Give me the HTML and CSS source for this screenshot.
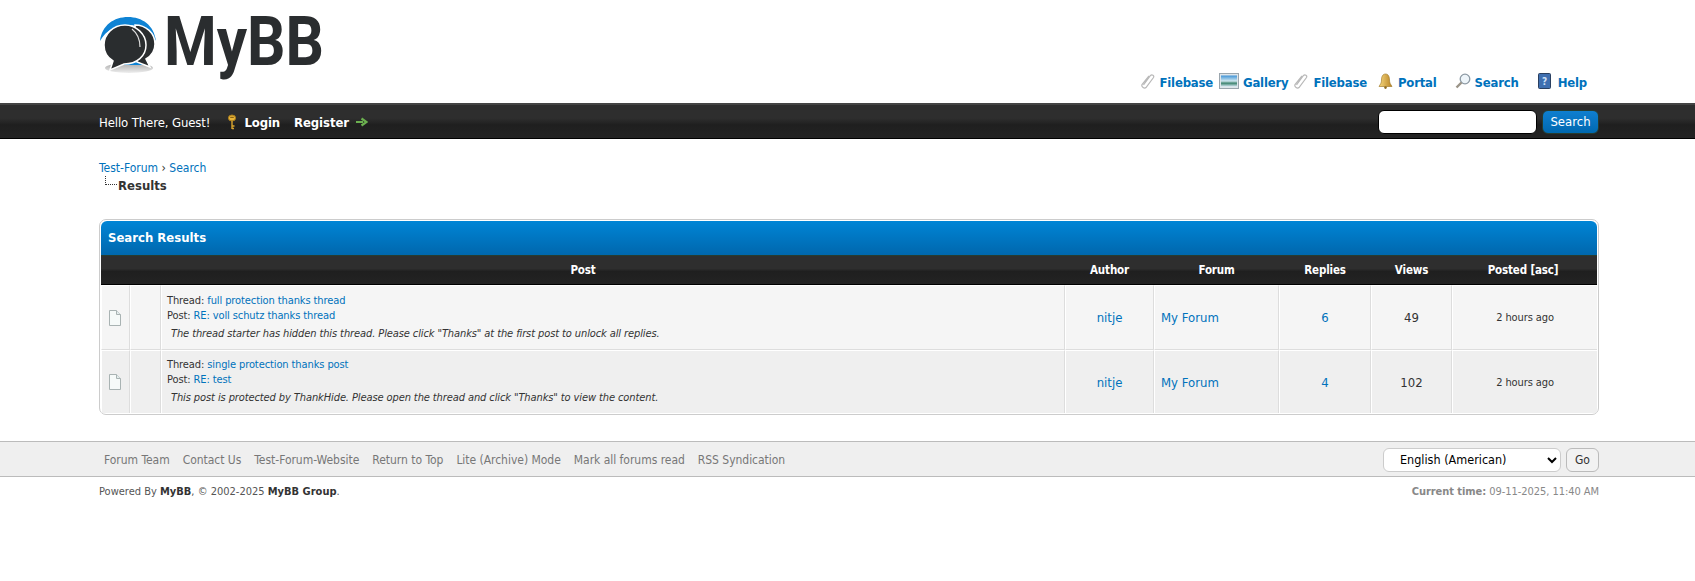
FILE: index.html
```html
<!DOCTYPE html>
<html lang="en">
<head>
<meta charset="utf-8">
<title>Search Results</title>
<link rel="stylesheet" href="styles.css">
</head>
<body>
<header class="masthead">
  <div class="wrap masthead-inner">
    <a class="logo" href="#">
      <svg class="logo-svg" width="280" height="90" viewBox="0 -12 280 90" aria-hidden="true">
        <defs>
          <linearGradient id="shadow" x1="0" y1="0" x2="0" y2="1"><stop offset="0" stop-color="#aaa"/><stop offset="1" stop-color="#eee"/></linearGradient>
          <linearGradient id="bell" x1="0" y1="0" x2="1" y2="0"><stop offset="0" stop-color="#f6d77e"/><stop offset="1" stop-color="#b98424"/></linearGradient>
        </defs>
        <ellipse cx="29" cy="56" rx="24" ry="5" fill="url(#shadow)"/>
        <path d="M0 29C2 13 14 5 28 5s26 8 28 24c-6-11-17-16-28-16S6 18 0 29Z" fill="#0f83d4"/>
        <path d="M12 48c8 4 26 4 34-1l-3 6H16Z" fill="#0f83d4"/>
        <path d="M35 13c11 0 20 8 20 19 0 7-4 12-9 15l4 8-13-5Z" fill="#2a2d2f" stroke="#fff" stroke-width="1.5"/>
        <path d="M25 13C13 13 4 22 4 33c0 7 4 13 9 16l-3 9 14-6c13 0 22-8 22-19S36 13 25 13Z" fill="#2a2d2f" stroke="#fff" stroke-width="1.5"/>
        <path d="M32 17c5 4 8 10 8 18" fill="none" stroke="#ddd" stroke-width="1.2"/>
        <text class="logo-text" x="64" y="53" textLength="160" lengthAdjust="spacingAndGlyphs">MyBB</text>
      </svg>
    </a>
    <ul class="top-menu">
      <li class="first"><a href="#"><span class="ibox"><svg width="15" height="16" viewBox="0 0 15 16"><path d="M3.500 12 10.500 2.500C12 1 14.500 2.500 13.500 4.500L6 14.500C4.500 16 1 14 2 11.500L9 3" fill="none" stroke="#b9b9b9" stroke-width="1.200"/></svg></span>Filebase</a></li>
      <li class="g6"><a href="#"><span class="ibox wide"><svg width="20" height="16" viewBox="0 0 20 16"><defs><linearGradient id="pic" x1="0" y1="0" x2="0" y2="1"><stop offset="0" stop-color="#3f93d6"/><stop offset=".5" stop-color="#cfe6ee"/><stop offset=".7" stop-color="#3f8570"/><stop offset="1" stop-color="#cfe4ee"/></linearGradient></defs><rect x=".5" y=".5" width="19" height="15" fill="#dfe6ea" stroke="#9aa5ad"/><rect x="2" y="2.500" width="16" height="11" fill="url(#pic)"/></svg></span>Gallery</a></li>
      <li class="g5"><a href="#"><span class="ibox"><svg width="15" height="16" viewBox="0 0 15 16"><path d="M3.500 12 10.500 2.500C12 1 14.500 2.500 13.500 4.500L6 14.500C4.500 16 1 14 2 11.500L9 3" fill="none" stroke="#b9b9b9" stroke-width="1.200"/></svg></span>Filebase</a></li>
      <li class="g11"><a href="#"><span class="ibox"><svg width="15" height="16" viewBox="0 0 15 16"><path d="M7.500 1c3 0 4 3 4 6 0 3 1 4 2.500 6.500H1C2.500 11 3.500 10 3.500 7c0-3 1-6 4-6Z" fill="url(#bell)" stroke="#99701f" stroke-width=".6"/><circle cx="7.500" cy="14.600" r="1.300" fill="#8f6a1e"/></svg></span>Portal</a></li>
      <li class="g18"><a href="#"><span class="ibox"><svg width="16" height="16" viewBox="0 0 16 16"><circle cx="10" cy="6" r="4.800" fill="#eef5fa" stroke="#8d9aa4" stroke-width="1.300"/><path d="M6.500 9.500 1.500 14.500" stroke="#9b9488" stroke-width="2.400"/></svg></span>Search</a></li>
      <li class="g19"><a href="#"><span class="ibox"><svg width="13" height="16" viewBox="0 0 13 16"><rect x=".5" y=".5" width="12" height="15" rx="1" fill="#3f6fb0" stroke="#2a3f5f"/><text class="help-q" x="6.500" y="12">?</text></svg></span>Help</a></li>
    </ul>
  </div>
</header>
<nav class="panel">
  <div class="wrap panel-inner">
    <div class="welcome">
      <span>Hello There, Guest!</span>
      <a class="strong-link key" href="#"><svg width="10" height="16" viewBox="0 0 10 16"><ellipse cx="5" cy="4" rx="3.600" ry="3" fill="#e8b53a" stroke="#a87c1c"/><rect x="3.200" y="2.800" width="3.600" height="1.200" fill="#8a6414"/><path d="M5 7v8M5 12h2.500M5 14.500h2" stroke="#d9a52e" stroke-width="1.400" fill="none"/></svg>Login</a>
      <a class="strong-link" href="#">Register<svg width="12" height="10" viewBox="0 0 12 10"><path d="M0 5h7M5.500 1.500 10.500 5l-5 3.500" fill="none" stroke="#6bb04f" stroke-width="2.200"/></svg></a>
    </div>
    <form class="panel-search">
      <input class="search-input" type="text" aria-label="Search">
      <button class="search-btn" type="button">Search</button>
    </form>
  </div>
</nav>
<main class="wrap content">
  <div class="crumbs">
    <div><a href="#">Test-Forum</a> › <a href="#">Search</a></div>
    <div class="crumb-active"><span class="crumb-tree"></span><strong>Results</strong></div>
  </div>
  <div class="tborder">
    <div class="thead">Search Results</div>
    <table class="results">
      <colgroup>
        <col class="c-a"><col class="c-b"><col class="c-post"><col class="c-author"><col class="c-forum"><col class="c-replies"><col class="c-views"><col class="c-posted">
      </colgroup>
      <thead>
        <tr><th colspan="3">Post</th><th>Author</th><th>Forum</th><th>Replies</th><th>Views</th><th>Posted [asc]</th></tr>
      </thead>
      <tbody>
        <tr class="row1">
          <td class="center"><svg class="doc" width="12" height="16" viewBox="0 0 12 16"><path d="M.5.500h7l4 4v11H.5Z" fill="#f6faf9" stroke="#a9b3b3"/><path d="M7.500.500v4h4" fill="#e4eded" stroke="#a9b3b3"/></svg></td>
          <td></td>
          <td class="post-cell">
            <div>Thread: <a href="#">full protection thanks thread</a></div>
            <div>Post: <a href="#">RE: voll schutz thanks thread</a></div>
            <div class="excerpt"><em>The thread starter has hidden this thread. Please click "Thanks" at the first post to unlock all replies.</em></div>
          </td>
          <td class="center big"><a href="#">nitje</a></td>
          <td class="big"><a href="#">My Forum</a></td>
          <td class="center big"><a href="#">6</a></td>
          <td class="center big">49</td>
          <td class="center">2 hours ago</td>
        </tr>
        <tr class="row2">
          <td class="center"><svg class="doc" width="12" height="16" viewBox="0 0 12 16"><path d="M.5.500h7l4 4v11H.5Z" fill="#f6faf9" stroke="#a9b3b3"/><path d="M7.500.500v4h4" fill="#e4eded" stroke="#a9b3b3"/></svg></td>
          <td></td>
          <td class="post-cell">
            <div>Thread: <a href="#">single protection thanks post</a></div>
            <div>Post: <a href="#">RE: test</a></div>
            <div class="excerpt"><em>This post is protected by ThankHide. Please open the thread and click "Thanks" to view the content.</em></div>
          </td>
          <td class="center big"><a href="#">nitje</a></td>
          <td class="big"><a href="#">My Forum</a></td>
          <td class="center big"><a href="#">4</a></td>
          <td class="center big">102</td>
          <td class="center">2 hours ago</td>
        </tr>
      </tbody>
    </table>
  </div>
</main>
<footer>
  <div class="upper">
    <div class="wrap upper-inner">
      <ul class="foot-links">
        <li><a href="#">Forum Team</a></li>
        <li><a href="#">Contact Us</a></li>
        <li><a href="#">Test-Forum-Website</a></li>
        <li><a href="#">Return to Top</a></li>
        <li><a href="#">Lite (Archive) Mode</a></li>
        <li><a href="#">Mark all forums read</a></li>
        <li><a href="#">RSS Syndication</a></li>
      </ul>
      <form class="lang">
        <select class="lang-select" aria-label="Language"><option>English (American)</option></select>
        <button class="go" type="button">Go</button>
      </form>
    </div>
  </div>
  <div class="wrap lower">
    <span class="powered">Powered By <b>MyBB</b>, © 2002-2025 <b>MyBB Group</b>.</span>
    <span class="time"><b>Current time:</b> 09-11-2025, 11:40 AM</span>
  </div>
</footer>
</body>
</html>
```
FILE: styles.css
```css
* { box-sizing: border-box; }
html, body { margin: 0; padding: 0; background: #fff; }
body { font-family: "DejaVu Sans", sans-serif; font-stretch: condensed; font-size: 11px; color: #333; }
a { color: #0072bc; text-decoration: none; }
ul { list-style: none; margin: 0; padding: 0; }
.wrap { width: 1500px; margin-left: 99px; }

.masthead { height: 103px; }
.masthead-inner { display: flex; justify-content: space-between; height: 103px; }
.logo { display: block; margin-left: 1px; height: 90px; }
.logo-svg { display: block; }
.logo-text { font-family: Roboto, sans-serif; font-stretch: normal; font-size: 69px; font-weight: 700; fill: #2a2d2f; }
.top-menu { display: flex; align-items: center; height: 18px; margin-top: 73px; margin-right: 12px; font-size: 13px; font-weight: bold; letter-spacing: -0.2px; }
.top-menu li.g6 { margin-left: 6px; }
.top-menu li.g5 { margin-left: 5px; }
.top-menu li.g11 { margin-left: 11px; }
.top-menu li.g18 { margin-left: 18px; }
.top-menu li.g19 { margin-left: 19px; }
.top-menu a { display: flex; align-items: center; color: #0072bc; }
.ibox { display: block; width: 20px; height: 16px; margin-top: -3px; }
.ibox.wide { width: 24px; }
.ibox svg { display: block; }
.help-q { font-size: 10px; fill: #cfe0f5; text-anchor: middle; font-weight: bold; }

.panel { height: 36px; background: linear-gradient(#2e2e2e 0, #2e2e2e 40%, #1f1f1f 60%, #232323 100%); border-top: 2px solid #444; border-bottom: 1px solid #000; color: #fff; }
.panel-inner { display: flex; align-items: center; justify-content: space-between; height: 33px; }
.welcome { display: flex; align-items: center; padding-top: 1px; font-size: 13px; letter-spacing: -0.1px; }
.strong-link { color: #fff; font-weight: bold; font-size: 13px; display: flex; align-items: center; gap: 7px; margin-left: 14px; }
.key { margin-left: 17px; }
.panel-search { display: flex; align-items: center; gap: 5px; }
.search-input { width: 159px; height: 24px; border: 1px solid #000; border-radius: 6px; background: #fff; padding: 0; }
.search-btn { width: 57px; height: 24px; padding: 0; border: 1px solid #263c30; border-radius: 6px; background: linear-gradient(#0f7fd0, #0068b0); color: #fff; font-family: inherit; font-stretch: condensed; font-size: 13px; }

.content { padding-top: 20px; }
.crumbs { font-size: 12px; line-height: 18px; }
.crumb-active { display: flex; align-items: flex-start; font-size: 13px; margin-left: 6px; }
.crumb-tree { width: 12px; height: 9px; margin-top: -1px; margin-right: 1px; border-left: 1px dotted #333; border-bottom: 1px dotted #333; }
.tborder { margin-top: 24px; border: 1px solid #ccc; border-radius: 7px; padding: 1px; height: 196px; overflow: hidden; }
.thead { height: 35px; line-height: 34px; padding-left: 7px; font-size: 13px; font-weight: bold; color: #fff; border-radius: 6px 6px 0 0; background: linear-gradient(#0085d6, #0067ad); border-bottom: 1px solid #263c30; }
.results { width: 1496px; border-collapse: separate; border-spacing: 0; table-layout: fixed; font-size: 11px; letter-spacing: -0.1px; }
.c-a { width: 29px; } .c-b { width: 31px; } .c-post { width: 904px; } .c-author { width: 89px; } .c-forum { width: 125px; } .c-replies { width: 92px; } .c-views { width: 81px; } .c-posted { width: 145px; }
.results th { height: 29px; padding: 0; color: #fff; font-size: 11.5px; letter-spacing: -0.15px; background: linear-gradient(#2e2e2e 0, #2e2e2e 45%, #1f1f1f 55%, #232323 100%); border-bottom: 1px solid #000; }
.results th:last-child { padding-right: 3px; }
.results td { height: 65px; padding: 0 6px; border-right: 1px solid #ddd; border-left: 1px solid #fff; border-bottom: 1px solid #ddd; border-top: 1px solid #fff; vertical-align: middle; line-height: 15px; color: #333; }
.results td:last-child { border-right: 0; }
.results tr:last-child td { border-bottom: 0; height: 63px; }
.results td.post-cell { padding-left: 5px; padding-bottom: 2px; }
.row1 td { background: #f5f5f5; }
.row2 td { background: #efefef; }
.center { text-align: center; }
.results td.big { font-size: 13px; letter-spacing: 0; }
.doc { display: block; margin: 0 0 0 1px; }
.excerpt { margin-top: 3px; padding-left: 4px; }

footer { margin-top: 26px; }
.upper { height: 36px; background: #efefef; border-top: 1px solid #bbb; border-bottom: 1px solid #bbb; }
.upper-inner { display: flex; align-items: center; justify-content: space-between; height: 34px; padding-top: 1px; }
.foot-links { display: flex; gap: 13px; padding-left: 5px; font-size: 12px; letter-spacing: -0.03px; }
.foot-links a { color: #777; }
.lang { display: flex; align-items: center; gap: 5px; }
.lang-select { width: 178px; height: 24px; border: 1px solid #ccc; border-radius: 6px; background: #fff; padding-left: 12px; font-family: inherit; font-stretch: condensed; font-size: 12.5px; color: #000; }
.go { width: 33px; height: 24px; padding: 0; border: 1px solid #bbb; border-radius: 6px; background: #f2f2f2; font-family: inherit; font-stretch: condensed; font-size: 12px; color: #333; }
.lower { display: flex; justify-content: space-between; padding-top: 8px; line-height: 14px; font-size: 11px; }
.powered { color: #555; }
.powered b { color: #333; }
.time { color: #888; letter-spacing: -0.05px; }
```
